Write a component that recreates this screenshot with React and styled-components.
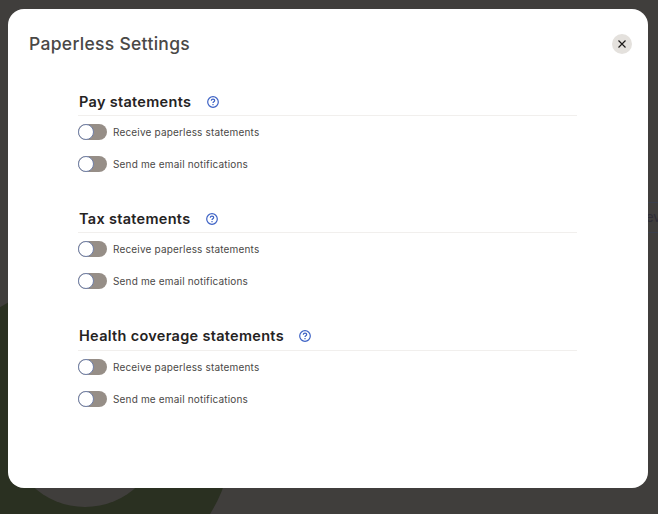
import React from "react";
import styled, { createGlobalStyle } from "styled-components";

const GlobalStyle = createGlobalStyle`
  html, body {
    margin: 0;
    padding: 0;
    height: 100%;
    font-family: "Inter", "Liberation Sans", sans-serif;
  }
`;

const Page = styled.div`
  position: relative;
  width: 658px;
  height: 514px;
  overflow: hidden;
  background: #403e3c;
  box-sizing: border-box;
  padding: 9px 10px 26px 8px;
`;

const Backdrop = styled.svg`
  position: absolute;
  left: 0;
  top: 0;
`;

// the button behind the modal, only its edge shows on the right
const BehindButton = styled.div`
  position: absolute;
  left: 648px;
  top: 202px;
  width: 30px;
  height: 29px;
  border-top: 1px solid #3a3f4c;
  border-bottom: 1px solid #3a3f4c;
  font-size: 13px;
  line-height: 29px;
  color: #2e2c36;
  text-indent: -2px;
`;

const Modal = styled.div`
  position: relative;
  height: 100%;
  background: #ffffff;
  border-radius: 16px;
  box-sizing: border-box;
`;

const ModalHeader = styled.div`
  display: flex;
  align-items: center;
  justify-content: space-between;
  padding: 23px 16.5px 0 21px;
  height: 47px;
  box-sizing: border-box;
`;

const Title = styled.h1`
  margin: 0;
  font-size: 17.5px;
  line-height: 24px;
  font-weight: 500;
  letter-spacing: 0.3px;
  color: #4a4846;
`;

const CloseButton = styled.button`
  display: flex;
  align-items: center;
  justify-content: center;
  width: 20px;
  height: 20px;
  padding: 0;
  border: none;
  border-radius: 50%;
  background: #e4e1dd;
  color: #1d1b1a;
`;

const Content = styled.div`
  display: flex;
  flex-direction: column;
  gap: 31.4px;
  width: 499px;
  margin: 32px 0 0 70px;
`;

const Section = styled.section`
  display: flex;
  flex-direction: column;
`;

const SectionHeader = styled.div`
  display: flex;
  align-items: center;
  gap: 15.5px;
  height: 28px;
  padding-left: 1px;
  box-sizing: border-box;
  border-bottom: 1px solid #f1efed;
`;

const SectionTitle = styled.h2`
  margin: 0;
  font-size: 14.5px;
  line-height: 20px;
  font-weight: 600;
  letter-spacing: 0.3px;
  color: #25231f;
`;

const HelpIcon = styled.svg`
  display: block;
  color: #3e63c5;
`;

const Rows = styled.div`
  display: flex;
  flex-direction: column;
  gap: 12px;
  margin-top: 6px;
`;

const Row = styled.label`
  display: flex;
  align-items: center;
  gap: 6px;
  height: 20px;
`;

const Track = styled.span`
  position: relative;
  display: block;
  width: 29px;
  height: 16px;
  border-radius: 8px;
  background: #968e87;
`;

const Knob = styled.span`
  position: absolute;
  left: 0;
  top: 0;
  width: 16px;
  height: 16px;
  box-sizing: border-box;
  border-radius: 50%;
  background: #ffffff;
  border: 1px solid #6f7fa8;
`;

const RowLabel = styled.span`
  font-size: 10px;
  line-height: 14px;
  letter-spacing: 0.17px;
  color: #4a4846;
`;

const Help = () => (
  <HelpIcon width="12" height="12" viewBox="0 0 12 12" fill="none" stroke="currentColor">
    <circle cx="6" cy="6" r="5.3" strokeWidth="1.2" />
    <path d="M4.3 4.7c0-1 .7-1.6 1.7-1.6s1.7.6 1.7 1.5c0 1.2-1.7 1.2-1.7 2.4" strokeWidth="1.2" />
    <path d="M6 8.1v1.1" strokeWidth="1.2" />
  </HelpIcon>
);

const Toggle = () => (
  <Track>
    <Knob />
  </Track>
);

const sections = ["Pay statements", "Tax statements", "Health coverage statements"];

const App = () => {
  return (
    <>
      <GlobalStyle />
      <Page>
        <Backdrop width="658" height="514" viewBox="0 0 658 514">
          <circle cx="82" cy="434" r="151" fill="#2a3021" />
          <circle cx="85" cy="431" r="76" fill="#403e3c" />
        </Backdrop>
        <BehindButton>ev</BehindButton>
        <Modal>
          <ModalHeader>
            <Title>Paperless Settings</Title>
            <CloseButton aria-label="Close">
              <svg width="10" height="10" viewBox="0 0 10 10" fill="none" stroke="currentColor" strokeWidth="1.2">
                <path d="M1.5 1.5l7 7M8.5 1.5l-7 7" />
              </svg>
            </CloseButton>
          </ModalHeader>
          <Content>
            {sections.map((name) => (
              <Section key={name}>
                <SectionHeader>
                  <SectionTitle>{name}</SectionTitle>
                  <Help />
                </SectionHeader>
                <Rows>
                  <Row>
                    <Toggle />
                    <RowLabel>Receive paperless statements</RowLabel>
                  </Row>
                  <Row>
                    <Toggle />
                    <RowLabel>Send me email notifications</RowLabel>
                  </Row>
                </Rows>
              </Section>
            ))}
          </Content>
        </Modal>
      </Page>
    </>
  );
};

export default App;
